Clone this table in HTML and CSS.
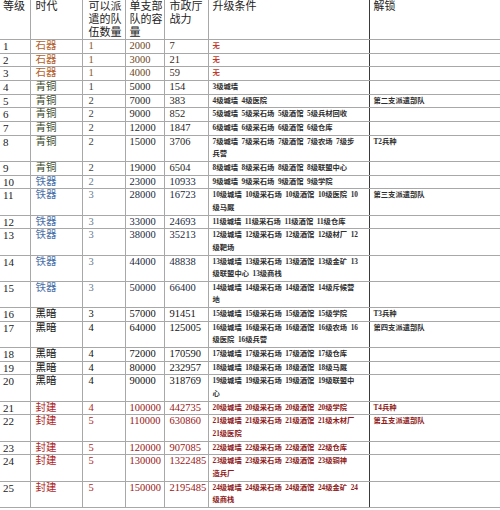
FILE: index.html
```html
<!DOCTYPE html>
<html lang="zh">
<head>
<meta charset="utf-8">
<link rel="stylesheet" href="styles.css">
</head>
<body>
<table class="grid">
<colgroup>
<col class="c1"><col class="c2"><col class="c3"><col class="c4"><col class="c5"><col class="c6"><col class="c7">
</colgroup>
<thead>
<tr>
<th class="lv">等级</th><th class="era">时代</th><th class="cnt">可以派遣的队伍数量</th><th class="cap">单支部队的容量</th><th class="pow">市政厅战力</th><th class="cond">升级条件</th><th class="unlock">解锁</th>
</tr>
</thead>
<tbody>
<tr class="stone"><td class="lv">1</td><td class="era">石器</td><td class="cnt">1</td><td class="cap">2000</td><td class="pow">7</td><td class="cond none">无</td><td class="unlock"></td></tr>
<tr class="stone"><td class="lv">2</td><td class="era">石器</td><td class="cnt">1</td><td class="cap">3000</td><td class="pow">21</td><td class="cond none">无</td><td class="unlock"></td></tr>
<tr class="stone"><td class="lv">3</td><td class="era">石器</td><td class="cnt">1</td><td class="cap">4000</td><td class="pow">59</td><td class="cond none">无</td><td class="unlock"></td></tr>
<tr class="bronze"><td class="lv">4</td><td class="era">青铜</td><td class="cnt">1</td><td class="cap">5000</td><td class="pow">154</td><td class="cond">3级城墙</td><td class="unlock"></td></tr>
<tr class="bronze"><td class="lv">5</td><td class="era">青铜</td><td class="cnt">2</td><td class="cap">7000</td><td class="pow">383</td><td class="cond">4级城墙 4级医院</td><td class="unlock">第二支派遣部队</td></tr>
<tr class="bronze"><td class="lv">6</td><td class="era">青铜</td><td class="cnt">2</td><td class="cap">9000</td><td class="pow">852</td><td class="cond">5级城墙 5级采石场 5级酒馆 5级兵材回收</td><td class="unlock"></td></tr>
<tr class="bronze"><td class="lv">7</td><td class="era">青铜</td><td class="cnt">2</td><td class="cap">12000</td><td class="pow">1847</td><td class="cond">6级城墙 6级采石场 6级酒馆 6级仓库</td><td class="unlock"></td></tr>
<tr class="bronze strong"><td class="lv">8</td><td class="era">青铜</td><td class="cnt">2</td><td class="cap">15000</td><td class="pow">3706</td><td class="cond">7级城墙 7级采石场 7级酒馆 7级农场 7级步<br>兵营</td><td class="unlock">T2兵种</td></tr>
<tr class="bronze"><td class="lv">9</td><td class="era">青铜</td><td class="cnt">2</td><td class="cap">19000</td><td class="pow">6504</td><td class="cond">8级城墙 8级采石场 8级酒馆 8级联盟中心</td><td class="unlock"></td></tr>
<tr class="iron"><td class="lv">10</td><td class="era">铁器</td><td class="cnt">2</td><td class="cap">23000</td><td class="pow">10933</td><td class="cond">9级城墙 9级采石场 9级酒馆 9级学院</td><td class="unlock"></td></tr>
<tr class="iron"><td class="lv">11</td><td class="era">铁器</td><td class="cnt">3</td><td class="cap">28000</td><td class="pow">16723</td><td class="cond">10级城墙 10级采石场 10级酒馆 10级医院 10<br>级马厩</td><td class="unlock">第三支派遣部队</td></tr>
<tr class="iron"><td class="lv">12</td><td class="era">铁器</td><td class="cnt">3</td><td class="cap">33000</td><td class="pow">24693</td><td class="cond">11级城墙 11级采石场 11级酒馆 11级仓库</td><td class="unlock"></td></tr>
<tr class="iron"><td class="lv">13</td><td class="era">铁器</td><td class="cnt">3</td><td class="cap">38000</td><td class="pow">35213</td><td class="cond">12级城墙 12级采石场 12级酒馆 12级材厂 12<br>级靶场</td><td class="unlock"></td></tr>
<tr class="iron"><td class="lv">14</td><td class="era">铁器</td><td class="cnt">3</td><td class="cap">44000</td><td class="pow">48838</td><td class="cond">13级城墙 13级采石场 13级酒馆 13级金矿 13<br>级联盟中心 13级商栈</td><td class="unlock"></td></tr>
<tr class="iron"><td class="lv">15</td><td class="era">铁器</td><td class="cnt">3</td><td class="cap">50000</td><td class="pow">66400</td><td class="cond">14级城墙 14级采石场 14级酒馆 14级斥候营<br>地</td><td class="unlock"></td></tr>
<tr class="dark"><td class="lv">16</td><td class="era">黑暗</td><td class="cnt">3</td><td class="cap">57000</td><td class="pow">91451</td><td class="cond">15级城墙 15级采石场 15级酒馆 15级学院</td><td class="unlock">T3兵种</td></tr>
<tr class="dark"><td class="lv">17</td><td class="era">黑暗</td><td class="cnt">4</td><td class="cap">64000</td><td class="pow">125005</td><td class="cond">16级城墙 16级采石场 16级酒馆 16级农场 16<br>级医院 16级兵营</td><td class="unlock">第四支派遣部队</td></tr>
<tr class="dark"><td class="lv">18</td><td class="era">黑暗</td><td class="cnt">4</td><td class="cap">72000</td><td class="pow">170590</td><td class="cond">17级城墙 17级采石场 17级酒馆 17级仓库</td><td class="unlock"></td></tr>
<tr class="dark"><td class="lv">19</td><td class="era">黑暗</td><td class="cnt">4</td><td class="cap">80000</td><td class="pow">232957</td><td class="cond">18级城墙 18级采石场 18级酒馆 18级马厩</td><td class="unlock"></td></tr>
<tr class="dark"><td class="lv">20</td><td class="era">黑暗</td><td class="cnt">4</td><td class="cap">90000</td><td class="pow">318769</td><td class="cond">19级城墙 19级采石场 19级酒馆 19级联盟中<br>心</td><td class="unlock"></td></tr>
<tr class="feudal"><td class="lv">21</td><td class="era">封建</td><td class="cnt">4</td><td class="cap">100000</td><td class="pow">442735</td><td class="cond">20级城墙 20级采石场 20级酒馆 20级学院</td><td class="unlock">T4兵种</td></tr>
<tr class="feudal"><td class="lv">22</td><td class="era">封建</td><td class="cnt">5</td><td class="cap">110000</td><td class="pow">630860</td><td class="cond">21级城墙 21级采石场 21级酒馆 21级木材厂<br>21级医院</td><td class="unlock">第五支派遣部队</td></tr>
<tr class="feudal strong"><td class="lv">23</td><td class="era">封建</td><td class="cnt">5</td><td class="cap">120000</td><td class="pow">907085</td><td class="cond">22级城墙 22级采石场 22级酒馆 22级仓库</td><td class="unlock"></td></tr>
<tr class="feudal"><td class="lv">24</td><td class="era">封建</td><td class="cnt">5</td><td class="cap">130000</td><td class="pow">1322485</td><td class="cond">23级城墙 23级采石场 23级酒馆 23级铜神<br>造兵厂</td><td class="unlock"></td></tr>
<tr class="feudal"><td class="lv">25</td><td class="era">封建</td><td class="cnt">5</td><td class="cap">150000</td><td class="pow">2195485</td><td class="cond">24级城墙 24级采石场 24级酒馆 24级金矿 24<br>级商栈</td><td class="unlock"></td></tr>
</tbody>
</table>
</body>
</html>
```

FILE: styles.css
```css
html, body {
  margin: 0;
  padding: 0;
  background: #ffffff;
}

.grid {
  width: 500px;
  table-layout: fixed;
  border-collapse: collapse;
  font-family: "Liberation Serif", "Noto Sans CJK SC", serif;
  color: #1a1a1a;
}

.c1 { width: 30px; }
.c2 { width: 52px; }
.c3 { width: 43px; }
.c4 { width: 39px; }
.c5 { width: 44px; }
.c6 { width: 161px; }
.c7 { width: 131px; }

.grid th,
.grid td {
  border: 1px solid #a8a8a8;
  padding: 0 0 0 5px;
  text-align: left;
  vertical-align: top;
  overflow: hidden;
  white-space: nowrap;
}

.grid th {
  font-size: 11px;
  font-weight: 400;
  line-height: 13px;
  height: 39px;
  color: #222;
  white-space: normal;
  border-top: none;
}

.grid td {
  font-size: 10.5px;
  line-height: 12.66px;
}

.grid th:first-child,
.grid td:first-child {
  border-left: none;
  padding-left: 3px;
}

.grid th:last-child,
.grid td:last-child {
  border-right: none;
}

.grid .cnt { padding-left: 6px; }
.grid .cap { padding-left: 4px; }
.grid .pow { padding-left: 5px; }
.grid .cond { padding-left: 4px; border-right: 1px solid #3a3a3a; }
.grid .unlock { padding-left: 4px; }

.grid td.lv { color: #222; font-size: 11px; }

.grid td.era {
  font-size: 10.5px;
}

.grid td.cond,
.grid td.unlock {
  font-size: 7.3px;
  font-weight: 700;
  word-spacing: 1.7px;
  color: #2e2e2e;
}

.grid tr.strong td {
  border-top-color: #555;
}

/* Stone age */
.stone .era { color: #b4622a; }
.stone .cnt { color: #8a5528; }
.stone .cap { color: #6e4520; }
.stone .pow { color: #3a2a1a; }
.stone td.none { color: #c0392b; }

/* Bronze age */
.bronze .era { color: #3b4a2a; }
.bronze .cnt { color: #444; }
.bronze .cap,
.bronze .pow { color: #1f1f1f; }

/* Iron age */
.iron .era { color: #4a70a8; }
.iron .cnt { color: #6a7a8e; }
.iron .cap,
.iron .pow { color: #1c2a3e; }

/* Dark age */
.dark .era,
.dark .cnt,
.dark .cap,
.dark .pow { color: #111; }

/* Feudal age */
.feudal .era,
.feudal .cnt { color: #b01e1e; }
.feudal .cap,
.feudal .pow { color: #9a1515; }
.feudal td.cond,
.feudal td.unlock { color: #8e1a1a; }
```
